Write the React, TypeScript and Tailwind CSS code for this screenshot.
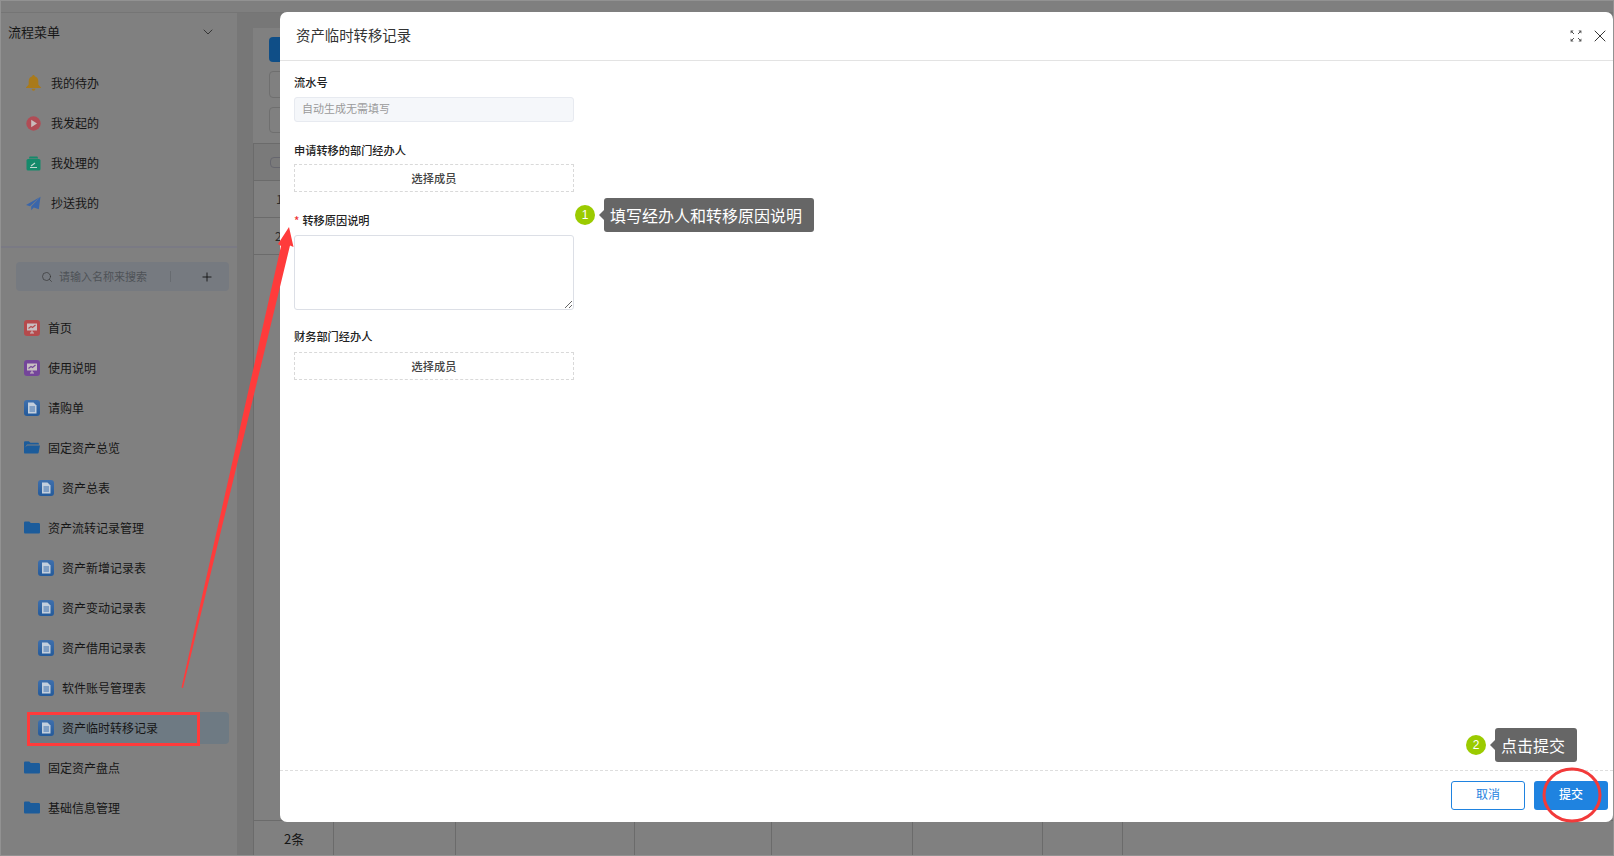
import React from "react";
import { ChevronDown, Search, Plus, X } from "lucide-react";

function DocIcon() {
  return (
    <svg width="16" height="16" viewBox="0 0 16 16" className="shrink-0">
      <defs>
        <linearGradient id="docg" x1="0" y1="0" x2="0" y2="1">
          <stop offset="0" stopColor="#3f70ad" />
          <stop offset="1" stopColor="#245a9a" />
        </linearGradient>
      </defs>
      <rect width="16" height="16" rx="3" fill="url(#docg)" />
      <path d="M4 2.5h5.5L12.5 5.5V13.5H4z" fill="#c3cfdd" />
      <path d="M5.5 7h5.5M5.5 9h5.5M5.5 11h5.5" stroke="#3f70ad" strokeWidth="1" />
    </svg>
  );
}
function FolderIcon({ open }: { open?: boolean }) {
  return (
    <svg width="16" height="16" viewBox="0 0 16 16" className="shrink-0">
      {open ? (
        <>
          <path d="M0 2.5C0 1.7.6 1.2 1.4 1.2h3.4l1.6 1.5h7.2c.8 0 1.3.5 1.3 1.2v.6H3L0 9z" fill="#1c5c9b" />
          <path d="M3.4 5.6H16l-1.4 7.2c-.1.5-.5.8-1 .8H1c-.6 0-1-.4-1-1V8z" fill="#1c5c9b" />
        </>
      ) : (
        <path d="M0 2.8C0 2 .6 1.5 1.4 1.5h3.8l1.6 1.6h7.8c.8 0 1.4.6 1.4 1.4v7.7c0 .8-.6 1.4-1.4 1.4H1.4C.6 13.6 0 13 0 12.2z" fill="#1c5c9b" />
      )}
    </svg>
  );
}
function MonitorIcon({ color }: { color: string }) {
  return (
    <svg width="16" height="16" viewBox="0 0 16 16" className="shrink-0">
      <rect width="16" height="16" rx="3" fill={color} />
      <path d="M3 3.5h10v7H3z" fill="#c9bfc2" />
      <path d="M6 13h4M8 10.5V13" stroke="#c9bfc2" strokeWidth="1.2" />
      <path d="M4.5 8.5 7 6.5l1.5 1L11.5 5" stroke={color} strokeWidth="1.1" fill="none" />
    </svg>
  );
}
function BellIcon() {
  return (
    <svg width="15" height="16" viewBox="0 0 15 16" className="shrink-0">
      <path d="M7.5 0c.7 0 1.1.5 1.2 1.2C11 1.8 12.3 3.8 12.3 6.2v3.4L15 12.4v.6H0v-.6l2.7-2.8V6.2c0-2.4 1.3-4.4 3.6-5C6.4.5 6.8 0 7.5 0z" fill="#a97a1a" />
      <path d="M5.6 13.7h3.8c0 1.2-.8 2-1.9 2s-1.9-.8-1.9-2z" fill="#a97a1a" />
    </svg>
  );
}
function PlayIcon() {
  return (
    <svg width="15" height="15" viewBox="0 0 15 15" className="shrink-0">
      <circle cx="7.5" cy="7.5" r="7.2" fill="#b04c55" />
      <path d="M5.2 3.8v7.4l5.8-3.7z" fill="#c9bcbc" />
    </svg>
  );
}
function DoneIcon() {
  return (
    <svg width="15" height="15" viewBox="0 0 15 15" className="shrink-0">
      <path d="M2.8 2.4 3.6.6h7.8l.8 1.8z" fill="#158a6b" />
      <rect x=".5" y="3" width="14" height="11.5" rx="1.5" fill="#158a6b" />
      <path d="M4 11.5h7M5 10l4-3" stroke="#c3d8d1" strokeWidth="1.1" />
    </svg>
  );
}
function SendIcon() {
  return (
    <svg width="15" height="15" viewBox="0 0 15 15" className="shrink-0">
      <path d="M14.5 .8 0 9l4 1.2z" fill="#3a66aa" />
      <path d="M14.5 .8 5.2 10.6v3.6l2.6-2.6 5 1.6z" fill="#3a66aa" />
    </svg>
  );
}
function FullscreenIcon() {
  return (
    <svg width="12" height="12" viewBox="0 0 12 12" fill="#555" stroke="#555" strokeWidth="1">
      <path d="M1 1l3 3M11 1L8 4M1 11l3-3M11 11L8 8" />
      <path d="M.6.6h3L.6 3.6zM11.4.6h-3l3 3zM.6 11.4h3l-3-3zM11.4 11.4h-3l3-3z" stroke="none" />
    </svg>
  );
}

const top = [
  { icon: <BellIcon />, label: "我的待办" },
  { icon: <PlayIcon />, label: "我发起的" },
  { icon: <DoneIcon />, label: "我处理的" },
  { icon: <SendIcon />, label: "抄送我的" },
];

const list: { kind: string; label: string; sub?: boolean; active?: boolean; color?: string }[] = [
  { kind: "mon", color: "#b54a4c", label: "首页" },
  { kind: "mon", color: "#74459a", label: "使用说明" },
  { kind: "doc", label: "请购单" },
  { kind: "open", label: "固定资产总览" },
  { kind: "doc", label: "资产总表", sub: true },
  { kind: "folder", label: "资产流转记录管理" },
  { kind: "doc", label: "资产新增记录表", sub: true },
  { kind: "doc", label: "资产变动记录表", sub: true },
  { kind: "doc", label: "资产借用记录表", sub: true },
  { kind: "doc", label: "软件账号管理表", sub: true },
  { kind: "doc", label: "资产临时转移记录", sub: true, active: true },
  { kind: "folder", label: "固定资产盘点" },
  { kind: "folder", label: "基础信息管理" },
];

function Sidebar() {
  return (
    <aside className="w-[237px] shrink-0 flex flex-col bg-[#808080] text-[#161616]">
      <div className="h-[38px] flex items-center justify-between pl-2 pr-[21px] text-[13px]">
        <span>流程菜单</span>
        <ChevronDown size={16} strokeWidth={1.2} color="#222" />
      </div>
      <div className="mt-3 flex flex-col border-b-2 border-[#7a7a84] pb-[23px]">
        {top.map((t) => (
          <div key={t.label} className="h-10 flex items-center pl-[26px] gap-[10px] text-xs">
            {t.icon}
            <span>{t.label}</span>
          </div>
        ))}
      </div>
      <div className="ml-4 mr-2 mt-[14px] h-[29px] rounded bg-[#767a80] flex items-center text-[11px] text-[#4e5257] pl-[25px] pr-[15px]">
        <Search size={12} strokeWidth={1.3} color="#333" />
        <span className="ml-[6px] flex-1">请输入名称来搜索</span>
        <span className="w-px h-[11px] bg-[#676b70] mr-[29px]" />
        <Plus size={14} strokeWidth={1.5} color="#111" />
      </div>
      <div className="mt-[17px] flex flex-col">
        {list.map((it) => (
          <div key={it.label} className={`h-10 flex items-center ${it.sub ? "pl-[30px] pr-2" : "pl-6"}`}>
            <div
              className={`flex items-center gap-2 text-xs h-8 w-full rounded ${it.sub ? "pl-2" : ""} ${
                it.active ? "bg-[#6e7a83]" : ""
              }`}
            >
              {it.kind === "doc" && <DocIcon />}
              {it.kind === "folder" && <FolderIcon />}
              {it.kind === "open" && <FolderIcon open />}
              {it.kind === "mon" && <MonitorIcon color={it.color as string} />}
              <span>{it.label}</span>
            </div>
          </div>
        ))}
      </div>
    </aside>
  );
}

const cols = [80, 122, 179, 137, 141, 130, 80];

function Main() {
  return (
    <main className="flex-1 min-w-0 bg-[#777777] pl-4 pt-[15px] flex flex-col">
      <div className="flex-1 flex flex-col bg-[#808080] text-[#161616]">
        <div className="pl-4 pt-[9px]">
          <div className="h-[25px] w-20 rounded bg-[#0f4e87]" />
          <div className="mt-[9px] h-[27px] w-40 rounded border border-[#6f6f6f]" />
          <div className="mt-[9px] h-[26px] w-40 rounded border border-[#6f6f6f]" />
        </div>
        <div className="mt-[10px] border-l border-[#6b6b6b] flex-1 flex flex-col">
          <div className="h-[38px] bg-[#7a7a7a] border-y border-[#6b6b6b] flex items-center pl-[16px]">
            <span className="w-[14px] h-[11px] rounded-sm border border-[#66666e]" />
          </div>
          <div className="h-[37px] border-b border-[#6b6b6b] flex items-center pl-[22px] text-xs text-[#2c2c2c]">1</div>
          <div className="h-[37px] border-b border-[#6b6b6b] flex items-center pl-[21px] text-xs text-[#2c2c2c]">2</div>
          <div className="flex-1" />
          <div className="h-[36px] border-t border-[#6b6b6b] flex text-[13px]">
            {cols.map((w, i) => (
              <div key={i} style={{ width: w }} className="shrink-0 h-full border-r border-[#6b6b6b] flex items-center pl-[30px]">
                {i === 0 ? "2条" : ""}
              </div>
            ))}
          </div>
        </div>
      </div>
    </main>
  );
}

function SelectMember({ gap }: { gap: string }) {
  return (
    <div className={`${gap} h-[28px] w-[280px] border border-dashed border-[#d9d9d9] flex items-center justify-center text-[11.2px] text-[#444]`}>
      选择成员
    </div>
  );
}

function Modal() {
  return (
    <section className="absolute left-[280px] top-3 w-[1333px] h-[810px] bg-white rounded-[7px] flex flex-col text-[#222]">
      <header className="h-[49px] shrink-0 border-b border-[#e3e3e3] flex items-center justify-between pl-[16px] pr-[3px]">
        <span className="text-[14.4px] text-[#333] pb-[2px]">资产临时转移记录</span>
        <div className="flex items-center gap-[8px]">
          <FullscreenIcon />
          <X size={20} strokeWidth={1.1} color="#222" />
        </div>
      </header>
      <div className="flex-1 pl-[14px] pt-[13px] text-[11.2px] font-medium">
        <div className="h-[17px] leading-[17px]">流水号</div>
        <input
          disabled
          placeholder="自动生成无需填写"
          className="mt-[6px] block h-[25px] w-[280px] rounded-[3px] border border-[#e7eaf0] bg-[#f5f7fa] pl-[7px] pr-2 pb-[3px] text-[11px] font-normal placeholder:text-[#9a9a9a]"
        />
        <div className="mt-[20px] h-[17px] leading-[17px]">申请转移的部门经办人</div>
        <SelectMember gap="mt-[5px]" />
        <div className="mt-[20px] h-[17px] leading-[17px]">
          <span className="text-[#e33] mr-[3px]">*</span>转移原因说明
        </div>
        <textarea className="mt-[6px] block h-[75px] w-[280px] rounded-[3px] border border-[#dcdfe6]" />
        <div className="mt-[18px] h-[17px] leading-[17px]">财务部门经办人</div>
        <SelectMember gap="mt-[7px]" />
      </div>
      <footer className="h-[52px] shrink-0 border-t border-dashed border-[#dedede] flex items-start justify-end pt-[10px] pr-[5px] gap-[9px]">
        <button className="w-[74px] h-[29px] pb-[3px] rounded-[3px] border border-[#1f83e0] bg-white text-xs text-[#1f83e0]">取消</button>
        <button className="w-[74px] h-[29px] pb-[3px] rounded-[3px] bg-[#1f83e0] text-xs font-medium text-white">提交</button>
      </footer>
    </section>
  );
}

function Tip({ n, text, className }: { n: number; text: string; className: string }) {
  return (
    <div className={`absolute flex items-center ${className}`}>
      <span className="w-5 h-5 rounded-full bg-[#9bcb00] text-white text-xs font-['Liberation_Sans',sans-serif] flex items-center justify-center">{n}</span>
      <span className="relative ml-[9px] h-[34px] pl-[6px] pr-[12px] pb-[1px] rounded-[3px] bg-[#666666] text-white text-base flex items-center whitespace-nowrap">
        <span className="absolute -left-[5px] top-[12px] w-0 h-0 border-y-[5px] border-y-transparent border-r-[5px] border-r-[#666666]" />
        {text}
      </span>
    </div>
  );
}

function Annotations() {
  return (
    <svg className="absolute inset-0 pointer-events-none" width="1614" height="856" viewBox="0 0 1614 856" fill="none">
      <polygon points="289,227 293.5,247 290,245.5 183,688 181.5,687.5 281,246 278,244" fill="#ff3b3b" />
      <rect x="28.5" y="713.5" width="170" height="31" stroke="#ff3b3b" strokeWidth="3" />
      <ellipse cx="1572" cy="795" rx="28" ry="26" stroke="#f23a3a" strokeWidth="3" />
    </svg>
  );
}

export default function App() {
  return (
    <div className="relative w-[1614px] h-[856px] overflow-hidden flex flex-col bg-[#808080] font-['Noto_Sans_CJK_SC','Liberation_Sans',sans-serif]">
      <div className="h-[13px] shrink-0 bg-[#7f7f7f] border-b border-[#757575]" />
      <div className="flex-1 flex min-h-0">
        <Sidebar />
        <Main />
      </div>
      <Modal />
      <Tip n={1} text="填写经办人和转移原因说明" className="left-[575px] top-[198px]" />
      <Tip n={2} text="点击提交" className="left-[1466px] top-[728px]" />
      <Annotations />
      <div className="absolute inset-0 border border-[#929292] pointer-events-none" />
    </div>
  );
}
